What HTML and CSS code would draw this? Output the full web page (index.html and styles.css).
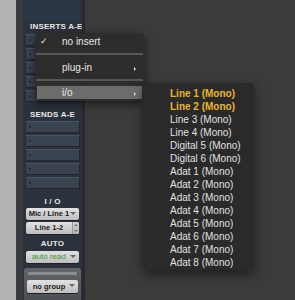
FILE: index.html
```html
<!DOCTYPE html>
<html>
<head>
<meta charset="utf-8">
<link rel="stylesheet" href="styles.css">
</head>
<body>
<div class="screen">
  <div class="edge-light"></div>
  <div class="edge-dark"></div>
  <div class="strip">
    <div class="top-panel"></div>
    <div class="label label-inserts">INSERTS A-E</div>
    <div class="slots">
      <div class="slot"></div><div class="slot"></div><div class="slot"></div><div class="slot"></div><div class="slot"></div>
    </div>
    <div class="label label-sends">SENDS A-E</div>
    <div class="slots">
      <div class="slot"></div><div class="slot"></div><div class="slot"></div><div class="slot"></div><div class="slot"></div>
    </div>
    <div class="label label-io">I / O</div>
    <div class="btn"><span class="btn-text">Mic / Line 1</span><span class="tri"></span></div>
    <div class="btn btn-step"><span class="btn-text">Line 1-2</span><span class="stepper"></span></div>
    <div class="label label-auto">AUTO</div>
    <div class="btn btn-green"><span class="btn-text">auto read</span><span class="tri"></span></div>
    <div class="group">
      <div class="group-bar"></div>
      <div class="btn btn-group"><span class="btn-text">no group</span><span class="tri"></span></div>
    </div>
  </div>
  <div class="divider"></div>
  <div class="rest"></div>

  <div class="menu">
    <div class="mi"><span class="check">✓</span><span class="mi-text">no insert</span></div>
    <div class="sep"></div>
    <div class="mi"><span class="mi-text">plug-in</span><span class="arrow"></span></div>
    <div class="sep"></div>
    <div class="mi mi-hl"><span class="mi-text">i/o</span><span class="arrow"></span></div>
  </div>

  <div class="submenu">
    <div class="si si-on">Line 1 (Mono)</div>
    <div class="si si-on">Line 2 (Mono)</div>
    <div class="si">Line 3 (Mono)</div>
    <div class="si">Line 4 (Mono)</div>
    <div class="si">Digital 5 (Mono)</div>
    <div class="si">Digital 6 (Mono)</div>
    <div class="si">Adat 1 (Mono)</div>
    <div class="si">Adat 2 (Mono)</div>
    <div class="si">Adat 3 (Mono)</div>
    <div class="si">Adat 4 (Mono)</div>
    <div class="si">Adat 5 (Mono)</div>
    <div class="si">Adat 6 (Mono)</div>
    <div class="si">Adat 7 (Mono)</div>
    <div class="si">Adat 8 (Mono)</div>
  </div>
</div>
</body>
</html>
```
FILE: styles.css
```css
* { box-sizing: border-box; }
html, body { margin: 0; padding: 0; }
body {
  width: 295px; height: 300px; overflow: hidden;
  background: #3b3b3b;
  font-family: "Liberation Sans", Arial, sans-serif;
}
.screen {
  position: relative;
  display: flex;
  width: 295px; height: 300px;
}
.edge-light { width: 16px; background: #b4b4b4; }
.edge-dark { width: 7px; background: #3a3c40; }
.strip {
  width: 59px;
  background: #2b323b;
  display: flex;
  flex-direction: column;
  padding: 0 1px;
}
.divider { width: 3px; background: #26292d; }
.rest { flex: 1; background: #3b3b3b; }

.top-panel { height: 22px; background: #2a3646; margin: 0 1px; }
.label {
  color: #e8e8e8;
  font-size: 8px;
  font-weight: bold;
  text-align: center;
  letter-spacing: 0.2px;
  white-space: nowrap;
}
.label-inserts { height: 12px; line-height: 10px; text-align: left; padding-left: 6px; }
.label-sends { height: 19px; padding-top: 6px; line-height: 13px; }
.label-io { height: 19px; padding-top: 7px; line-height: 12px; }
.label-auto { height: 15px; padding-top: 2px; line-height: 12px; }

.slots { display: flex; flex-direction: column; gap: 2px; padding: 0 1px; }
.slot {
  height: 12px;
  background: #3a4350;
  border: 1px solid #222831;
  border-top-color: #4a5462;
  border-radius: 1px;
  position: relative;
}
.slot::before {
  content: ""; position: absolute; left: 3px; top: 4px;
  width: 2px; height: 2px; background: #1e232a; border-radius: 1px;
}

.btn {
  height: 12px;
  margin: 0 2px 2px 2px;
  background: linear-gradient(#e2e2e2, #bdbdbd);
  border-radius: 2px;
  position: relative;
  box-shadow: 0 1px 0 #1c1f24;
}
.btn-text {
  position: absolute; left: 0; right: 7px; top: 0;
  text-align: center;
  font-size: 7.5px; font-weight: bold; color: #1a1a1a;
  line-height: 12px;
  white-space: nowrap;
}
.tri {
  position: absolute; right: 3px; top: 4px;
  width: 0; height: 0;
  border-left: 3px solid transparent; border-right: 3px solid transparent;
  border-top: 3px solid #666;
}
.stepper {
  position: absolute; right: 0; top: 0; bottom: 0; width: 7px;
  border-left: 1px solid #9a9a9a;
  background: linear-gradient(#cfcfcf, #b5b5b5);
  border-radius: 0 2px 2px 0;
}
.stepper::before {
  content: ""; position: absolute; left: 1px; top: 2px;
  border-left: 2px solid transparent; border-right: 2px solid transparent;
  border-bottom: 2px solid #777;
}
.stepper::after {
  content: ""; position: absolute; left: 1px; bottom: 2px;
  border-left: 2px solid transparent; border-right: 2px solid transparent;
  border-top: 2px solid #777;
}
.btn-green .btn-text { color: #3a9a2a; font-weight: normal; font-size: 8px; }
.group {
  margin-top: 3px;
  flex: 1;
  background: linear-gradient(#62666b, #4c5055);
  border-radius: 3px 3px 0 0;
  padding: 3px 2px 0;
  display: flex; flex-direction: column;
}
.group-bar {
  height: 3px; background: #8a8d91; margin: 1px 2px 5px;
  border-radius: 1px;
}
.btn-group { margin: 0 1px; height: 13px; }
.btn-group .btn-text { line-height: 13px; }

/* menus */
.menu {
  position: absolute; left: 35px; top: 33px;
  width: 109px; height: 68px;
  background: rgba(44, 44, 44, 0.97);
  border-radius: 4px;
  box-shadow: 0 3px 10px rgba(0,0,0,0.55);
  padding-top: 1px;
}
.mi {
  height: 15px; position: relative;
  color: #e6e6e6; font-size: 10px;
}
.mi-text { position: absolute; left: 27px; top: 1px; line-height: 13px; white-space: nowrap; }
.check { position: absolute; left: 5px; top: 1px; width: 9px; font-size: 9px; line-height: 13px; font-family: "DejaVu Sans", sans-serif; }
.arrow {
  position: absolute; right: 8px; top: 7px;
  border-top: 2px solid transparent; border-bottom: 2px solid transparent;
  border-left: 2px solid #ddd;
}
.sep { height: 2px; background: #575757; margin: 4px 1px 5px; }
.mi-hl {
  background: #6c6c6c; margin: 0 2px;
  height: 13px;
}
.mi-hl .mi-text { left: 25px; top: 0; }
.mi-hl .arrow { right: 6px; top: 6px; }

.submenu {
  position: absolute; left: 143px; top: 83px;
  width: 111px; height: 187px;
  background: rgba(42, 42, 42, 0.98);
  border-radius: 3px;
  box-shadow: 0 4px 12px rgba(0,0,0,0.5);
  padding: 4px 0 0 27px;
}
.si {
  height: 13px; line-height: 13px;
  font-size: 10px; color: #e0e0e0;
  white-space: nowrap;
}
.si-on { color: #e9b52a; font-weight: bold; }
```
